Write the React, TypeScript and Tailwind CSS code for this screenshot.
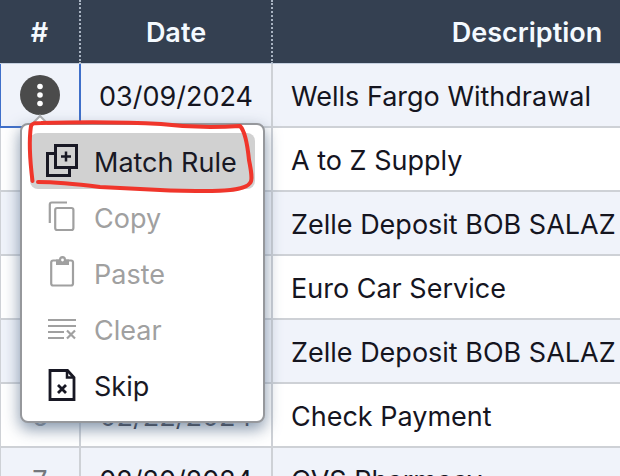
import type { ReactNode } from "react";

type Transaction = {
  id: number;
  date: string;
  description: string;
};

const transactions: Transaction[] = [
  { id: 1, date: "03/09/2024", description: "Wells Fargo Withdrawal" },
  { id: 2, date: "03/07/2024", description: "A to Z Supply" },
  { id: 3, date: "03/05/2024", description: "Zelle Deposit BOB SALAZ" },
  { id: 4, date: "03/01/2024", description: "Euro Car Service" },
  { id: 5, date: "02/26/2024", description: "Zelle Deposit BOB SALAZ" },
  { id: 6, date: "02/22/2024", description: "Check Payment" },
  { id: 7, date: "02/20/2024", description: "CVS Pharmacy" },
];

const MatchIcon = () => (
  <svg width="32" height="34" viewBox="0 0 32 34" fill="none" stroke="currentColor">
    <path d="M9 9.5H1.5v22h22V25" strokeWidth="3" />
    <path d="M9.5 1.5h21v22h-21z" strokeWidth="3" />
    <path d="M20 7.5v10M15 12.5h10" strokeWidth="2.5" />
  </svg>
);

const CopyIcon = () => (
  <svg width="32" height="34" viewBox="0 0 32 34" fill="none" stroke="currentColor" strokeWidth="2.2">
    <path d="M3.8 23V4.5a2 2 0 0 1 2-2H21" />
    <rect x="9.2" y="8" width="18.2" height="22" rx="2" />
  </svg>
);

const PasteIcon = () => (
  <svg width="32" height="34" viewBox="0 0 32 34" fill="none" stroke="currentColor" strokeWidth="2.2">
    <rect x="5.2" y="4.5" width="21.8" height="25" rx="2" />
    <path d="M10 3.5h3a3.5 3.5 0 0 1 7 0h3V9H10z" fill="currentColor" stroke="none" />
    <circle cx="16.5" cy="4" r="1.4" fill="white" stroke="none" />
  </svg>
);

const ClearIcon = () => (
  <svg width="32" height="34" viewBox="0 0 32 34" fill="none" stroke="currentColor" strokeWidth="2">
    <path d="M2 8h28M2 14h28M2 20h16M2 26h16" />
    <path d="M21 18.5l8 8M29 18.5l-8 8" strokeWidth="2.2" />
  </svg>
);

const SkipIcon = () => (
  <svg width="32" height="34" viewBox="0 0 32 34" fill="none" stroke="currentColor" strokeWidth="2.8">
    <path d="M4 2.5h17.5l6.5 7v22H4z" />
    <path d="M21 2.5v7h7" strokeWidth="2.5" />
    <path d="M12 17l8 8M20 17l-8 8" strokeWidth="2.8" />
  </svg>
);

type MenuItem = {
  label: string;
  icon: ReactNode;
  disabled?: boolean;
  active?: boolean;
};

const menuItems: MenuItem[] = [
  { label: "Match Rule", icon: <MatchIcon />, active: true },
  { label: "Copy", icon: <CopyIcon />, disabled: true },
  { label: "Paste", icon: <PasteIcon />, disabled: true },
  { label: "Clear", icon: <ClearIcon />, disabled: true },
  { label: "Skip", icon: <SkipIcon /> },
];

const RowMenu = () => {
  return (
    <div
      role="menu"
      className="absolute left-5 top-[123px] w-[245px] rounded-lg border-2 border-[#96989c] bg-white px-2 py-2 shadow-[0_6px_16px_rgba(110,130,155,0.85)]"
    >
      {/* little arrow that points at the row button */}
      <div className="absolute -top-2 left-3 h-3 w-3 rotate-45 border-l-2 border-t-2 border-[#a9acb1] bg-white" />
      {menuItems.map((item) => (
        <button
          key={item.label}
          role="menuitem"
          disabled={item.disabled}
          className={`relative flex h-14 w-full items-center gap-4 rounded-lg px-4 text-left text-[#181824] disabled:text-[#a0a0a0] ${
            item.active ? "bg-[#d1d1d1]" : ""
          }`}
        >
          {item.icon}
          <span className="pt-1">{item.label}</span>
        </button>
      ))}
      <svg
        className="pointer-events-none absolute left-0 -top-2 h-20 w-60"
        viewBox="0 0 240 80"
        fill="none"
        stroke="#f0352b"
        strokeWidth="4"
        strokeLinecap="round"
        strokeLinejoin="round"
      >
        <path d="M10.5 64C8 44 7 22 9 9c1-3 4-3 10-3 42-1 84-1 120 1 24 3 50 4 79 2 6 6 8 24 9 34 2 10 4 20 1 23-4 6-22 8-38 8-20 0-34 0-52-1-20-1-40-2-60-3-24-3-40-5-62-5" />
      </svg>
    </div>
  );
};

const App = () => {
  return (
    <main className="relative h-screen overflow-hidden bg-white font-['Inter',sans-serif] text-[27px] leading-8 text-[#15151f]">
      <table className="w-[781px] table-fixed border-separate border-spacing-0">
        <thead>
          <tr className="h-16 bg-[#344051] text-[#f4faff]">
            <th className="w-[81px] border-b border-r-2 border-b-[#c5d0e0] border-r-[#a9b4c2] pb-0 pt-0.5 font-semibold [border-right-style:dotted]">
              #
            </th>
            <th className="w-48 border-b border-r-2 border-b-[#c5d0e0] border-r-[#a9b4c2] pb-0 pt-0.5 font-semibold [border-right-style:dotted]">
              Date
            </th>
            <th className="border-b border-b-[#c5d0e0] pb-0 pt-0.5 font-semibold">
              Description
            </th>
          </tr>
        </thead>
        <tbody>
          {transactions.map((row) => (
            <tr key={row.id} className="h-16 odd:bg-[#f0f3fa]">
              {row.id === 1 ? (
                <td className="border-2 border-l border-t-0 border-[#3f6fc9] p-0">
                  <button
                    aria-label="Row actions"
                    className="mx-auto flex h-10 w-10 items-center justify-center rounded-full bg-[#4b4b4b]"
                  >
                    <svg width="40" height="40" viewBox="0 0 40 40" fill="white">
                      <circle cx="20" cy="11.5" r="2.8" />
                      <circle cx="20" cy="20" r="2.8" />
                      <circle cx="20" cy="28.5" r="2.8" />
                    </svg>
                  </button>
                </td>
              ) : (
                <td className="border-b-2 border-l border-r-2 border-[#ced1d6] px-0 pb-0 pt-1 text-center text-[#74777d]">
                  {row.id}
                </td>
              )}
              <td className="border-b-2 border-r-2 border-[#ced1d6] px-0 pb-0 pt-1 text-center">
                {row.date}
              </td>
              <td className="whitespace-nowrap border-b-2 border-[#ced1d6] pb-0 pl-[18px] pr-0 pt-1">
                {row.description}
              </td>
            </tr>
          ))}
        </tbody>
      </table>
      <RowMenu />
    </main>
  );
};

export default App;
